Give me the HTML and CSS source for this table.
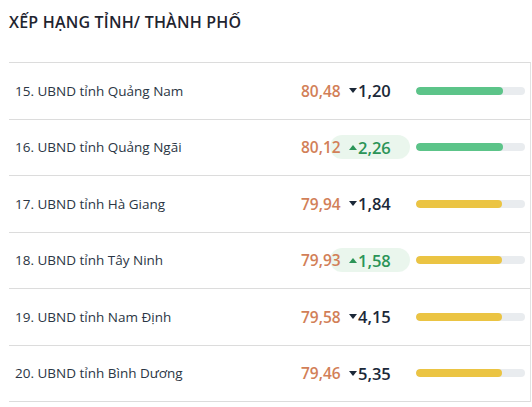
FILE: index.html
```html
<!DOCTYPE html>
<html lang="vi">
<head>
<meta charset="utf-8">
<title>Xếp hạng tỉnh/ thành phố</title>
<link rel="stylesheet" href="styles.css">
</head>
<body>
<div class="panel">
  <h2 class="title">XẾP HẠNG TỈNH/ THÀNH PHỐ</h2>
  <ul class="list">
    <li class="row">
      <span class="name">15. UBND tỉnh Quảng Nam</span>
      <span class="score">80,48</span>
      <span class="delta down"><i class="tri"></i>1,20</span>
      <span class="bar green"><span class="fill" style="width:80%"></span></span>
    </li>
    <li class="row">
      <span class="name">16. UBND tỉnh Quảng Ngãi</span>
      <span class="score">80,12</span>
      <span class="delta up"><i class="tri"></i>2,26</span>
      <span class="bar green"><span class="fill" style="width:80%"></span></span>
    </li>
    <li class="row">
      <span class="name">17. UBND tỉnh Hà Giang</span>
      <span class="score">79,94</span>
      <span class="delta down"><i class="tri"></i>1,84</span>
      <span class="bar yellow"><span class="fill" style="width:79%"></span></span>
    </li>
    <li class="row">
      <span class="name">18. UBND tỉnh Tây Ninh</span>
      <span class="score">79,93</span>
      <span class="delta up"><i class="tri"></i>1,58</span>
      <span class="bar yellow"><span class="fill" style="width:79%"></span></span>
    </li>
    <li class="row">
      <span class="name">19. UBND tỉnh Nam Định</span>
      <span class="score">79,58</span>
      <span class="delta down"><i class="tri"></i>4,15</span>
      <span class="bar yellow"><span class="fill" style="width:79%"></span></span>
    </li>
    <li class="row">
      <span class="name">20. UBND tỉnh Bình Dương</span>
      <span class="score">79,46</span>
      <span class="delta down"><i class="tri"></i>5,35</span>
      <span class="bar yellow"><span class="fill" style="width:79%"></span></span>
    </li>
  </ul>
</div>
</body>
</html>
```

FILE: styles.css
```css
* { box-sizing: border-box; }
html, body { margin: 0; padding: 0; background: #fff; }
body {
  font-family: "Open Sans", "Liberation Sans", sans-serif;
  color: #2a3543;
}
.panel {
  padding: 0 0 0 9px;
}
.title {
  margin: 0;
  height: 62px;
  padding-top: 11px;
  font-size: 16px;
  font-weight: 600;
  color: #1f2530;
  letter-spacing: 0.2px;
}
.list {
  list-style: none;
  margin: 0;
  padding: 0;
  border-top: 1px solid #dcdcdc;
  border-right: 1px solid #e2e2e2;
  margin-right: 1px;
}
.row {
  display: flex;
  align-items: center;
  height: 56.5px;
  border-bottom: 1px solid #dcdcdc;
  padding-left: 6px;
}
.name {
  flex: 1;
  font-size: 13.5px;
  color: #2b3644;
}
.score {
  font-size: 15.5px;
  font-weight: 600;
  color: #d27f58;
  width: 42px;
  position: relative;
  z-index: 1;
}
.delta {
  display: flex;
  align-items: center;
  gap: 1px;
  margin-left: -13px;
  padding: 0 18px 0 19px;
  height: 24px;
  width: 80px;
  border-radius: 12px;
  font-size: 16.5px;
  font-weight: 600;
}
.delta.down { color: #1b2838; }
.delta.up { color: #2b9457; background: rgba(225, 242, 230, 0.7); }
.tri {
  display: inline-block;
  width: 0;
  height: 0;
  border-left: 4.5px solid transparent;
  border-right: 4.5px solid transparent;
}
.down .tri { border-top: 5px solid #1b2838; }
.up .tri { border-bottom: 5px solid #2b9457; }
.bar {
  width: 109px;
  height: 8px;
  border-radius: 4px;
  background: #e9ecef;
  margin-left: 6px;
  margin-right: 5px;
  overflow: hidden;
  display: flex;
}
.fill { display: block; height: 100%; border-radius: 4px; }
.green .fill { background: #5cc489; }
.yellow .fill { background: #ebc443; }
```
